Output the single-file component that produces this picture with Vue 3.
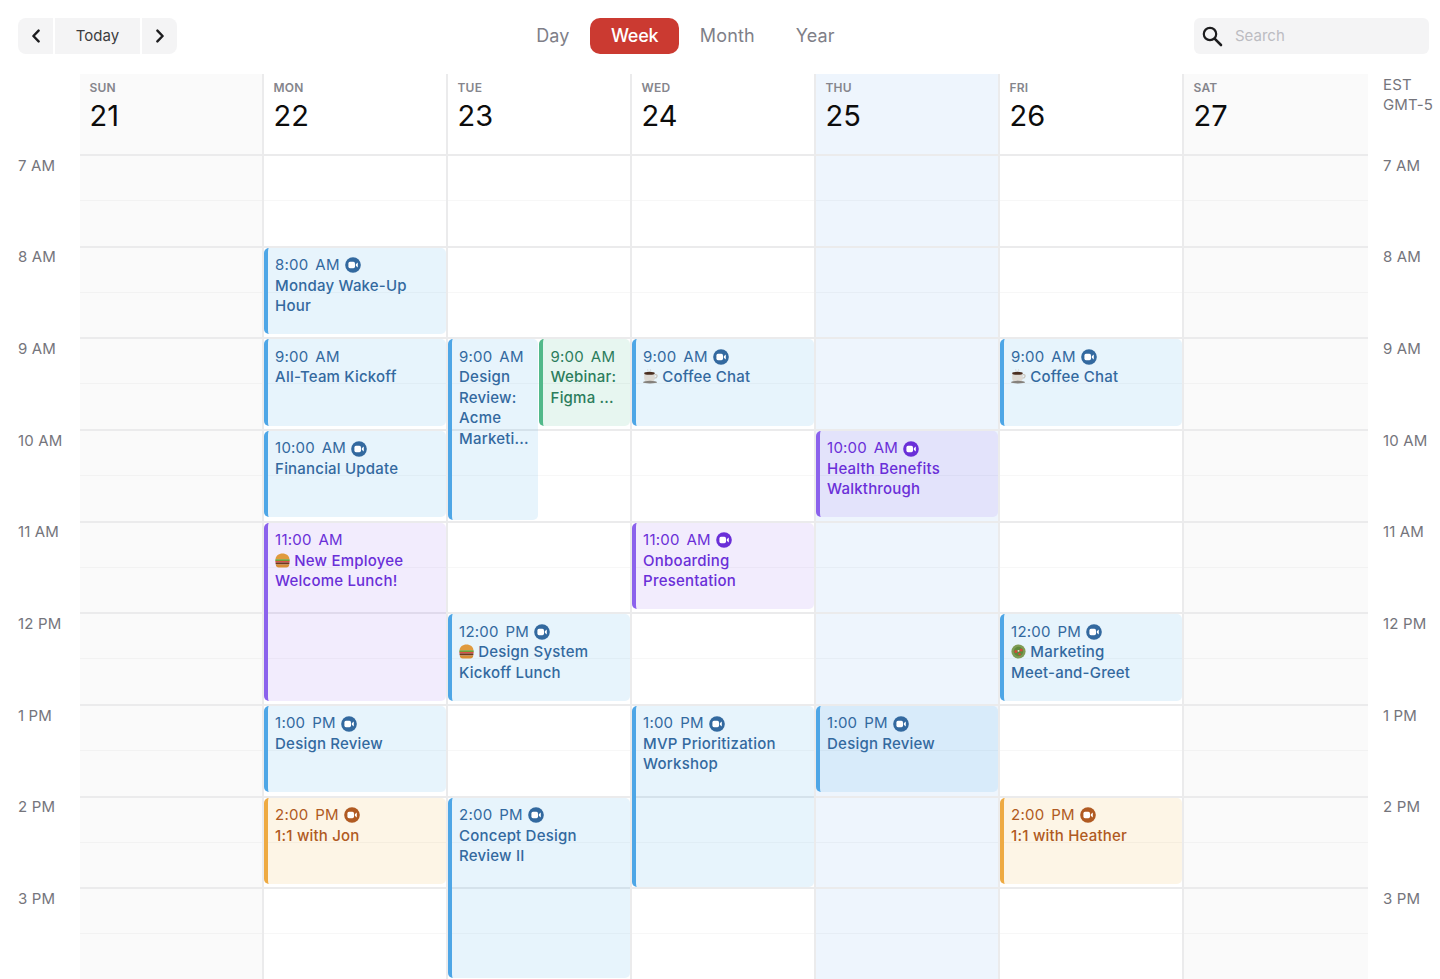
<template>
  <div class="calendar">
    <!-- top bar -->
    <header class="topbar">
      <div class="nav-group">
        <button class="nav-btn icon-btn" aria-label="Previous">
          <svg width="10" height="14" viewBox="0 0 10 14"><path d="M7.6 1.6 2.4 7l5.2 5.4" class="chevron" /></svg>
        </button>
        <button class="nav-btn today-btn">Today</button>
        <button class="nav-btn icon-btn" aria-label="Next">
          <svg width="10" height="14" viewBox="0 0 10 14"><path d="M2.4 1.6 7.6 7l-5.2 5.4" class="chevron" /></svg>
        </button>
      </div>

      <nav class="views">
        <a v-for="v in views" :key="v" class="view" :class="{ active: v === 'Week' }">{{ v }}</a>
      </nav>

      <label class="search">
        <svg width="22" height="22" viewBox="0 0 22 22">
          <circle cx="9" cy="9" r="6.2" fill="none" stroke="#1c1c1e" stroke-width="2.2" />
          <path d="m13.6 13.6 6.4 6.4" stroke="#1c1c1e" stroke-width="2.6" stroke-linecap="round" />
        </svg>
        <input type="text" placeholder="Search" />
      </label>
    </header>

    <!-- week grid -->
    <section class="week">
      <div class="time-col">
        <div class="time-head"></div>
        <div v-for="h in hours" :key="h" class="time-label">{{ h }}</div>
      </div>

      <div v-for="(day, d) in days" :key="day.name" class="day" :class="day.kind">
        <div class="day-head">
          <div class="day-name">{{ day.name }}</div>
          <div class="day-num">{{ day.num }}</div>
        </div>
        <div v-for="h in hours" :key="h" class="slot"></div>

        <div
          v-for="ev in eventsFor(d)"
          :key="ev.time + ev.title"
          class="event"
          :class="ev.color"
          :style="eventStyle(ev)"
        >
          <div class="ev-time">
            <span>{{ ev.time }}</span>
            <svg v-if="ev.video" class="video" width="16" height="16" viewBox="0 0 16 16">
              <circle cx="8" cy="8" r="7.8" fill="currentColor" />
              <rect x="3.4" y="4.8" width="6.6" height="6.4" rx="1.6" fill="#fff" />
              <path d="M10.8 7.2 12.8 5.6v4.8l-2-1.6z" fill="#fff" />
            </svg>
          </div>
          <div class="ev-title">
            <svg v-if="ev.emoji === 'burger'" class="emoji" width="15" height="15" viewBox="0.5 0.5 13 13">
              <path d="M1 6c0-3 2.700-5 6-5s6 2 6 5z" fill="#e09a3e" />
              <rect x=".6" y="6" width="12.800" height="1.500" rx=".7" fill="#6fa032" />
              <rect x=".8" y="7.500" width="12.400" height="1.300" fill="#d8443a" />
              <rect x="1" y="8.800" width="12" height="1.700" rx=".6" fill="#6b3a1e" />
              <path d="M1.200 10.500h11.600c0 1.600-1 2.500-2.500 2.500H3.700c-1.500 0-2.500-.9-2.500-2.500z" fill="#d98d35" />
            </svg>
            <svg v-else-if="ev.emoji === 'coffee'" class="emoji" width="15" height="15" viewBox="0.5 1 12.800 12.800">
              <path d="M1.500 4.500h9v4.500c0 1.700-1.300 2.700-2.800 2.700H4.300c-1.500 0-2.800-1-2.800-2.700z" fill="#ddd9d3" />
              <ellipse cx="6" cy="4.600" rx="4.500" ry="1.300" fill="#4a2e20" />
              <path d="M10.500 5.800h1c1.500 0 1.500 2.900-1.200 2.900" fill="none" stroke="#c9c5be" stroke-width="1.100" />
              <ellipse cx="6.500" cy="12.200" rx="6" ry="1.200" fill="#85817c" />
              <path d="M4.600 1.200c-.6.800.6 1.200 0 2.300M7 1.200c-.6.800.6 1.200 0 2.300" fill="none" stroke="#cfcfcf" stroke-width=".7" />
            </svg>
            <svg v-else-if="ev.emoji === 'salad'" class="emoji" width="15" height="15" viewBox="0 0 14 14">
              <circle cx="7" cy="7" r="6.600" fill="#7f9c55" />
              <circle cx="7" cy="7" r="4.400" fill="#5f8a3c" />
              <circle cx="4.600" cy="7" r="1.400" fill="#d5473a" />
              <circle cx="9.500" cy="5.600" r="1.400" fill="#d5473a" />
              <circle cx="8" cy="9.500" r="1.100" fill="#d5473a" />
              <circle cx="7" cy="6.400" r=".9" fill="#f1ead2" />
            </svg>
            {{ ev.title }}
          </div>
        </div>
      </div>

      <div class="time-col right">
        <div class="time-head zone">EST<br />GMT-5</div>
        <div v-for="h in hours" :key="h" class="time-label">{{ h }}</div>
      </div>
    </section>
  </div>
</template>

<script setup>
const HOUR = 91.67
const HEAD = 80

const views = ['Day', 'Week', 'Month', 'Year']
const hours = ['7 AM', '8 AM', '9 AM', '10 AM', '11 AM', '12 PM', '1 PM', '2 PM', '3 PM']

const days = [
  { name: 'SUN', num: 21, kind: 'weekend' },
  { name: 'MON', num: 22 },
  { name: 'TUE', num: 23 },
  { name: 'WED', num: 24 },
  { name: 'THU', num: 25, kind: 'today' },
  { name: 'FRI', num: 26 },
  { name: 'SAT', num: 27, kind: 'weekend last' }
]

// start is the hour of day, span in hours
const events = [
  { day: 1, start: 8, span: 1, color: 'blue', time: '8:00 AM', video: true, title: 'Monday Wake-Up Hour' },
  { day: 1, start: 9, span: 1, color: 'blue', time: '9:00 AM', title: 'All-Team Kickoff' },
  { day: 1, start: 10, span: 1, color: 'blue', time: '10:00 AM', video: true, title: 'Financial Update' },
  { day: 1, start: 11, span: 2, color: 'purple', time: '11:00 AM', emoji: 'burger', title: 'New Employee Welcome Lunch!' },
  { day: 1, start: 13, span: 1, color: 'blue', time: '1:00 PM', video: true, title: 'Design Review' },
  { day: 1, start: 14, span: 1, color: 'orange', time: '2:00 PM', video: true, title: '1:1 with Jon' },

  { day: 2, start: 9, span: 2.03, color: 'blue', time: '9:00 AM', title: 'Design Review: Acme Marketi...', left: -0.5, width: 90 },
  { day: 2, start: 9, span: 1, color: 'green', time: '9:00 AM', title: 'Webinar: Figma ...', left: 91, width: 90.5 },
  { day: 2, start: 12, span: 1, color: 'blue', time: '12:00 PM', video: true, emoji: 'burger', title: 'Design System Kickoff Lunch' },
  { day: 2, start: 14, span: 2.03, color: 'blue', time: '2:00 PM', video: true, title: 'Concept Design Review II' },

  { day: 3, start: 9, span: 1, color: 'blue', time: '9:00 AM', video: true, emoji: 'coffee', title: 'Coffee Chat' },
  { day: 3, start: 11, span: 1, color: 'purple', time: '11:00 AM', video: true, title: 'Onboarding Presentation' },
  { day: 3, start: 13, span: 2.03, color: 'blue', time: '1:00 PM', video: true, title: 'MVP Prioritization Workshop' },

  { day: 4, start: 10, span: 1, color: 'purple', time: '10:00 AM', video: true, title: 'Health Benefits Walkthrough' },
  { day: 4, start: 13, span: 1, color: 'blue', time: '1:00 PM', video: true, title: 'Design Review' },

  { day: 5, start: 9, span: 1, color: 'blue', time: '9:00 AM', video: true, emoji: 'coffee', title: 'Coffee Chat' },
  { day: 5, start: 12, span: 1, color: 'blue', time: '12:00 PM', video: true, emoji: 'salad', title: 'Marketing\nMeet-and-Greet' },
  { day: 5, start: 14, span: 1, color: 'orange', time: '2:00 PM', video: true, title: '1:1 with Heather' }
]

function eventsFor(d) {
  return events.filter(ev => ev.day === d)
}

function eventStyle(ev) {
  const left = ev.left ?? -0.5
  const width = ev.width ?? 182
  return {
    top: `${HEAD + (ev.start - 7) * HOUR + 1.9}px`,
    height: `${ev.span * HOUR - 5.2}px`,
    left: `${left}px`,
    width: `${width}px`
  }
}
</script>

<style scoped>
.calendar {
  width: 1440px;
  height: 979px;
  overflow: hidden;
  background: #fff;
  font-family: Inter, 'Liberation Sans', sans-serif;
  color: #111;
}

.topbar {
  display: flex;
  justify-content: space-between;
  align-items: center;
  height: 36px;
  padding: 18px 11px 20px 18px;
}

.nav-group {
  display: flex;
  gap: 2px;
}

.nav-btn {
  height: 36px;
  border: none;
  background: #f4f4f5;
  font-family: inherit;
  font-size: 15px;
  color: #3c3c40;
  padding: 0 0 1px;
  display: flex;
  align-items: center;
  justify-content: center;
}

.icon-btn {
  width: 35px;
}

.icon-btn:first-child {
  border-radius: 8px 0 0 8px;
}

.icon-btn:last-child {
  border-radius: 0 8px 8px 0;
}

.today-btn {
  width: 85px;
}

.chevron {
  fill: none;
  stroke: #1c1c1e;
  stroke-width: 2.4;
  stroke-linecap: round;
  stroke-linejoin: round;
}

.views {
  display: flex;
  align-items: center;
}

.view {
  height: 36px;
  line-height: 36px;
  padding: 0 20.5px;
  font-size: 18px;
  letter-spacing: 0.15px;
  color: #7f7f88;
  border-radius: 10px;
}

.view.active {
  padding: 0 20.8px;
  background: #cb3a31;
  color: #fff;
  font-weight: 500;
  letter-spacing: -0.2px;
}

.search {
  width: 235px;
  height: 36px;
  box-sizing: border-box;
  display: flex;
  align-items: center;
  gap: 12px;
  padding-left: 7px;
  background: #f4f4f5;
  border-radius: 6px;
}

.search input {
  flex: 1;
  min-width: 0;
  border: none;
  outline: none;
  background: transparent;
  padding: 0 0 1px;
  font-family: inherit;
  font-size: 15px;
}

.search input::placeholder {
  color: #bcbcc2;
}

.week {
  display: grid;
  grid-template-columns: 80px repeat(7, 184px) 72px;
}

.time-col {
  padding-left: 18px;
  font-size: 15px;
  letter-spacing: 0.15px;
  color: #75757c;
}

.time-col.right {
  padding-left: 15px;
}

.time-head {
  height: 80.6px;
}

.zone {
  line-height: 20px;
  padding-top: 1px;
  height: 79.6px;
}

.time-label {
  height: 91.67px;
  line-height: 20px;
  padding-top: 1px;
  box-sizing: border-box;
}

.day {
  position: relative;
  border-right: 2px solid #ebebec;
  box-sizing: border-box;
}

.day.weekend {
  background: #fafafa;
}

.day.today {
  background: #eef5fd;
}

.day.last {
  border-right: none;
}

.day-head {
  height: 80px;
  box-sizing: border-box;
  padding: 6px 0 0 9.5px;
}

.day-name {
  font-size: 12px;
  font-weight: 600;
  line-height: 15px;
  letter-spacing: 0.2px;
  color: #85858c;
}

.day-num {
  font-size: 29px;
  line-height: 36px;
  margin-top: 3px;
  color: #0c0c0c;
}

.slot {
  position: relative;
  height: 91.67px;
  box-sizing: border-box;
  border-top: 2px solid #ebebec;
}

.slot::after {
  content: '';
  position: absolute;
  left: 0;
  right: 0;
  top: 44px;
  border-top: 1px solid rgba(0, 0, 0, 0.03);
}

/* events sit over the hour grid and let its lines show through */
.event {
  position: absolute;
  box-sizing: border-box;
  padding: 7.5px 4px 0 7.6px;
  border-left: 4px solid;
  border-radius: 5px;
  font-size: 15px;
  line-height: 20.5px;
  letter-spacing: 0.2px;
  overflow: hidden;
}

.event.blue {
  color: #33699f;
  background: rgba(60, 170, 235, 0.125);
  border-left-color: #4ea6e6;
}

.event.purple {
  color: #6a2fd8;
  background: rgba(140, 90, 240, 0.115);
  border-left-color: #8b62ec;
}

.event.green {
  color: #2c7d5c;
  background: rgba(20, 165, 110, 0.1);
  border-left-color: #52b98a;
}

.event.orange {
  color: #b05a22;
  background: rgba(240, 160, 30, 0.11);
  border-left-color: #eeaa42;
}

.ev-time {
  display: flex;
  align-items: center;
  gap: 5px;
  word-spacing: 2.5px;
  white-space: nowrap;
}

.ev-title {
  font-weight: 500;
  white-space: pre-line;
}

.video {
  flex: none;
}

.emoji {
  vertical-align: -2px;
}
</style>

<style>
html,
body {
  margin: 0;
  overflow: hidden;
}
</style>
